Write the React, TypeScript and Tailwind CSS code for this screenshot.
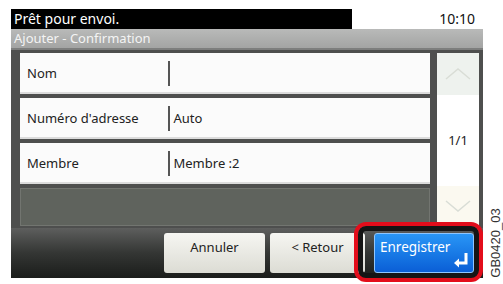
import React from "react";

const rows = [
  { label: "Nom", value: "" },
  { label: "Numéro d'adresse", value: "Auto" },
  { label: "Membre", value: "Membre :2" },
];

const EnterIcon = () => (
  <svg width="16" height="16" viewBox="0 0 16 16" className="block">
    <path d="M13 1 V11 H5" stroke="white" strokeWidth="3" fill="none" />
    <path d="M1 11 L6 6.5 V15.5 Z" fill="white" />
  </svg>
);

const Chevron = ({ up }: { up?: boolean }) => (
  <svg width="28" height="14" viewBox="0 0 28 14" className="block">
    <path
      d={up ? "M2 12 L14 2 L26 12" : "M2 2 L14 12 L26 2"}
      stroke="#d9ddd6"
      strokeWidth="1.5"
      fill="none"
    />
  </svg>
);

const Row = ({ label, value }: { label: string; value: string }) => (
  <div className="h-[41px] bg-[#fbfbfb] flex items-center shadow-[inset_0_-2px_0_#dcdcdc]">
    <div className="w-[148px] pl-[7px] text-[13px] text-[#222]">{label}</div>
    <div className="w-[1.5px] h-[25px] bg-[#555]" />
    <div className="pl-[4px] text-[13px] text-[#222]">{value}</div>
  </div>
);

export default function App() {
  return (
    <div
      className="relative w-[503px] h-[284px] bg-white overflow-hidden"
      style={{ fontFamily: "'Noto Sans', 'DejaVu Sans', sans-serif" }}
    >
      <div className="absolute left-[11px] top-[9px] w-[472px] h-[269px] flex flex-col">
        {/* status bar */}
        <div className="h-[20px] flex">
          <div className="w-[341px] bg-black text-white text-[14px] leading-[20px] pl-[3px]">
            Prêt pour envoi.
          </div>
          <div className="flex-1 bg-white text-[14px] leading-[20px] text-right pr-[8px] text-[#111]">
            10:10
          </div>
        </div>
        {/* title */}
        <div className="h-[21px] bg-gradient-to-b from-[#b9bab9] to-[#a3a4a3] border-b-[2px] border-[#7d7e7d] text-[#f4f4f4] text-[13px] leading-[19px] pl-[3px]">
          Ajouter - Confirmation
        </div>
        {/* list */}
        <div className="h-[178px] bg-[#4e4f4e] flex pl-[9px] pr-[4px] pt-[3px]">
          <div className="w-[410px] flex flex-col gap-[4px]">
            {rows.map((r) => (
              <Row key={r.label} label={r.label} value={r.value} />
            ))}
            <div className="h-[38px] bg-[#5f635d] border border-[#727570]" />
          </div>
          <div className="ml-[7px] w-[42px] h-[173px] bg-white flex flex-col">
            <div className="h-[42px] bg-[#eef2ee] flex items-center justify-center">
              <Chevron up />
            </div>
            <div className="flex-1 flex items-center justify-center text-[13px] text-[#222]">
              1/1
            </div>
            <div className="h-[40px] bg-[#fbf9f0] flex items-center justify-center">
              <Chevron />
            </div>
          </div>
        </div>
        {/* buttons */}
        <div className="h-[50px] bg-gradient-to-b from-[#5e5f5e] via-[#343634] to-[#1b1d1b] flex justify-end gap-[5px] pt-[5px] pr-[9px]">
          <button className="w-[101px] h-[40px] rounded-[3px] bg-gradient-to-b from-[#f6f6f2] to-[#dcdcd4] text-[13px] text-[#222] pt-[5px] flex justify-center items-start">
            Annuler
          </button>
          <button className="w-[95px] h-[40px] rounded-[3px] bg-gradient-to-b from-[#f6f6f2] to-[#dcdcd4] text-[13px] text-[#222] pt-[5px] flex justify-center items-start">
            &lt; Retour
          </button>
          <button className="relative z-10 ml-[4px] w-[100px] h-[40px] rounded-[3px] border border-[#8ec6ff] bg-gradient-to-b from-[#2a96f6] to-[#0b5ed6] text-[13.5px] text-white pt-[3px] pl-[5px] flex flex-col items-start">
            Enregistrer
            <span className="absolute right-[4px] bottom-[4px]">
              <EnterIcon />
            </span>
          </button>
        </div>
      </div>
      {/* highlight */}
      <div className="absolute left-[354px] top-[222px] w-[129px] h-[60px] rounded-[12px] border-[4px] border-[#e30d1b] shadow-[inset_0_0_0_5px_#151515]" />
      <div
        className="absolute left-[496px] top-[243px] -translate-x-1/2 -translate-y-1/2 -rotate-90 whitespace-nowrap text-[13px] text-[#333]"
        style={{ fontFamily: "'Liberation Sans', sans-serif" }}
      >
        GB0420_03
      </div>
    </div>
  );
}
